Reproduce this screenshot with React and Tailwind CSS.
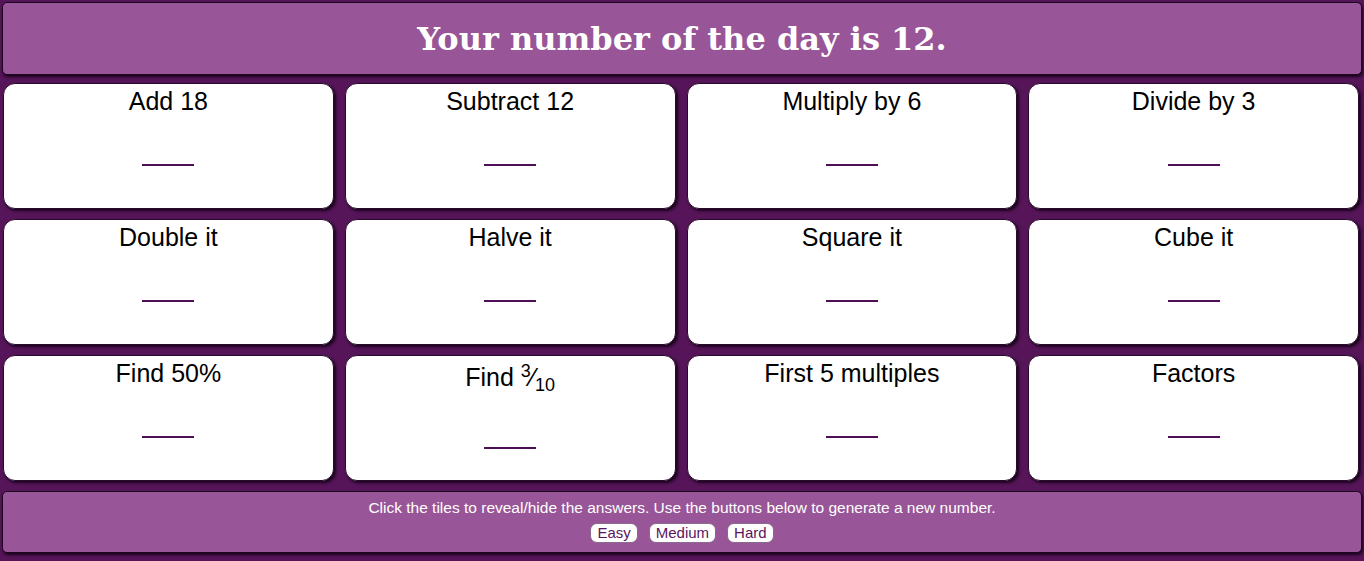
import React from 'react'

const tiles = [
    { label: 'Add 18' },
    { label: 'Subtract 12' },
    { label: 'Multiply by 6' },
    { label: 'Divide by 3' },
    { label: 'Double it' },
    { label: 'Halve it' },
    { label: 'Square it' },
    { label: 'Cube it' },
    { label: 'Find 50%' },
    { label: 'Find', frac: true },
    { label: 'First 5 multiples' },
    { label: 'Factors' },
]

function Tile({ tile }) {
    return (
        <div className="flex flex-col items-center h-[126px] bg-white rounded-[12px] border border-[#2a0a2c] shadow-[2px_2px_3px_#1a031c] pt-[3px]">
            <div className={'text-[25px] leading-[29px] text-black ' + (tile.frac ? 'pt-[4px]' : '')}>
                {tile.label}
                {tile.frac && (
                    <>
                        {' '}
                        <sup className="text-[18px] top-[-9px]">3</sup>⁄<sub className="text-[18px] bottom-[-5px]">10</sub>
                    </>
                )}
            </div>
            <div className={(tile.frac ? 'mt-[55px]' : 'mt-[48px]') + ' w-[52px] h-[2px] bg-[#4e0e55]'}></div>
        </div>
    )
}

export default function App() {
    return (
        <div className="min-h-[561px] bg-[#561559] p-[2px] font-['Liberation_Sans',Arial,sans-serif]">
            {/* Cabecera */}
            <div className="h-[73px] flex items-center justify-center bg-[#985597] border border-[#1c041e] rounded-[5px] shadow-[1px_2px_3px_#1a031c]">
                <h1 className="text-white text-[32px] font-bold font-['DejaVu_Serif',serif]">
                    Your number of the day is 12.
                </h1>
            </div>

            {/* Tiles */}
            <div className="grid grid-cols-4 gap-x-[11px] gap-y-[10px] mt-[8px] pl-[1px] pr-[3px]">
                {tiles.map((t, i) => (
                    <Tile key={i} tile={t} />
                ))}
            </div>

            {/* Pie */}
            <div className="mt-[10px] h-[62px] flex flex-col items-center bg-[#985597] border border-[#1c041e] rounded-[5px] shadow-[1px_2px_3px_#1a031c] pt-[7px]">
                <p className="text-white text-[15.5px] leading-[18px]">
                    Click the tiles to reveal/hide the answers. Use the buttons below to generate a new number.
                </p>
                <div className="flex gap-[11px] mt-[6px]">
                    {['Easy', 'Medium', 'Hard'].map(b => (
                        <button
                            key={b}
                            className="h-[20px] bg-white text-[#5b1560] text-[15px] leading-[18px] px-[6px] border border-[#8a6a8a] rounded-[7px]"
                        >
                            {b}
                        </button>
                    ))}
                </div>
            </div>
        </div>
    )
}
